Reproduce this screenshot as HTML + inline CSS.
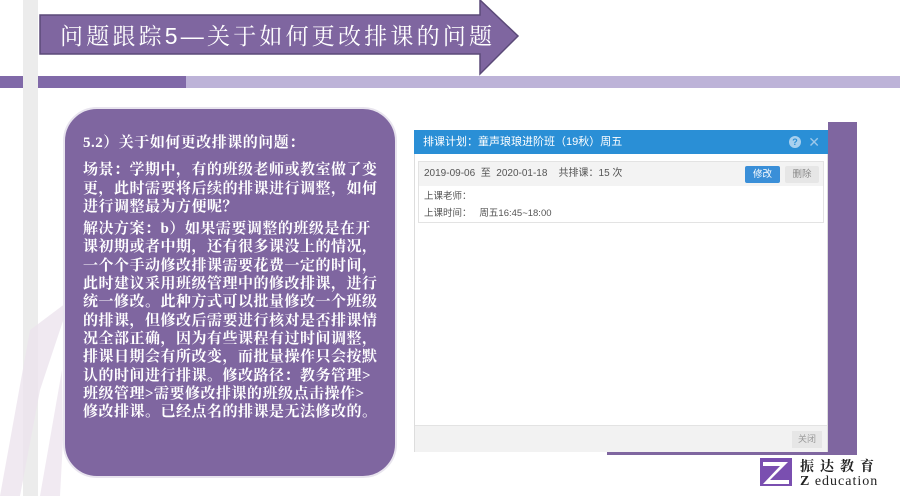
<!DOCTYPE html>
<html><head><meta charset="utf-8"><style>
*{margin:0;padding:0;box-sizing:border-box}
body{width:900px;height:496px;background:#fff;position:relative;overflow:hidden;font-family:"Liberation Sans","Noto Sans CJK SC",sans-serif}
.abs{position:absolute}
.txt{font-family:"Liberation Serif","Noto Serif CJK SC",serif;color:#fff;font-weight:bold;font-size:15px;letter-spacing:0.5px;line-height:18.3px;white-space:nowrap}
.txt p{margin-bottom:4px}
</style></head><body>
<div class="abs" style="left:23px;top:0;width:15px;height:496px;background:#ececec"></div>
<div class="abs" style="left:0;top:76px;width:23px;height:12px;background:#8069a8"></div>
<div class="abs" style="left:38px;top:76px;width:148px;height:12px;background:#8069a8"></div>
<div class="abs" style="left:186px;top:76px;width:714px;height:12px;background:#bdb3d8"></div>
<svg class="abs" style="left:0;top:0" width="900" height="496">
<polygon points="40,15 480,15 480,0 518,36 480,74 480,54 40,54" fill="#7f66a0" stroke="#5b4a78" stroke-width="1.5"/>
<path d="M0,496 L30,330 L70,300 L40,390 L20,496 Z" fill="#ece4ee" opacity="0.8"/>
<path d="M40,496 L62,370 L63,440 L60,496 Z" fill="#eee5ef" opacity="0.8"/>
</svg>
<div class="abs" style="left:60px;top:18px;font-size:23px;color:#fff;letter-spacing:3.2px;font-family:'Liberation Sans','Noto Serif CJK SC',serif">问题跟踪5—关于如何更改排课的问题</div>
<div class="abs" style="left:63px;top:107px;width:334px;height:371px;background:#7f66a0;border-radius:34px;border:2px solid #e8e4ee"></div>
<div class="abs txt" style="left:83px;top:134px">
<p style="margin-bottom:9px">5.2）关于如何更改排课的问题：</p>
<p>场景：学期中，有的班级老师或教室做了变<br>更，此时需要将后续的排课进行调整，如何<br>进行调整最为方便呢？</p>
<p>解决方案：b）如果需要调整的班级是在开<br>课初期或者中期，还有很多课没上的情况，<br>一个个手动修改排课需要花费一定的时间，<br>此时建议采用班级管理中的修改排课，进行<br>统一修改。此种方式可以批量修改一个班级<br>的排课，但修改后需要进行核对是否排课情<br>况全部正确，因为有些课程有过时间调整，<br>排课日期会有所改变，而批量操作只会按默<br>认的时间进行排课。修改路径：教务管理&gt;<br>班级管理&gt;需要修改排课的班级点击操作&gt;<br>修改排课。已经点名的排课是无法修改的。</p>
</div>
<div class="abs" style="left:828px;top:122px;width:29px;height:333px;background:#7f66a0"></div>
<div class="abs" style="left:607px;top:451px;width:250px;height:4px;background:#7f66a0"></div>
<div class="abs" style="left:414px;top:130px;width:414px;height:322px;background:#fff;border:1px solid #ddd"></div>
<div class="abs" style="left:414px;top:130px;width:414px;height:24px;background:#2a8fd6;color:#fff;font-size:11px;line-height:24px;padding-left:9px">排课计划：童声琅琅进阶班（19秋）周五
<span style="position:absolute;right:27px;top:6px;width:12px;height:12px;border-radius:50%;background:#a8d0ee;color:#2a8fd6;font-size:9px;line-height:12px;text-align:center;font-weight:bold">?</span>
<span style="position:absolute;right:8px;top:0;color:#9cc8ea;font-size:14px">✕</span></div>
<div class="abs" style="left:418px;top:161px;width:406px;height:62px;border:1px solid #e3e3e3;font-size:9.5px;color:#555">
<div style="background:#f3f3f3;height:24px;line-height:24px;padding-left:5px;font-size:10px">2019-09-06 &nbsp;至 &nbsp;2020-01-18 &nbsp;&nbsp;&nbsp;共排课：15 次</div>
<div style="position:absolute;left:326px;top:4px;width:35px;height:17px;background:#3a8fd8;color:#fff;text-align:center;line-height:17px;border-radius:2px">修改</div>
<div style="position:absolute;left:366px;top:4px;width:34px;height:17px;background:#e6e6e6;color:#888;text-align:center;line-height:17px;border-radius:2px">删除</div>
<div style="padding-left:5px;line-height:17px;margin-top:2px">上课老师：</div>
<div style="padding-left:5px;line-height:17px">上课时间： &nbsp;&nbsp;周五16:45~18:00</div>
</div>
<div class="abs" style="left:415px;top:425px;width:412px;height:27px;background:#f2f2f2;border-top:1px solid #e3e3e3"></div>
<div class="abs" style="left:792px;top:431px;width:30px;height:17px;background:#e6e6e6;color:#999;font-size:9px;text-align:center;line-height:17px">关闭</div>
<svg class="abs" style="left:760px;top:458px" width="32" height="28"><rect width="32" height="28" fill="#7a4fb0"/><path d="M3,4 H28 L10,22 H29 V26 H3 L20,8 H3Z" fill="#fff"/></svg>
<div class="abs" style="left:800px;top:456px;font-family:'Liberation Serif','Noto Serif CJK SC',serif;font-weight:bold;font-size:14px;letter-spacing:6px;color:#222">振达教育</div>
<div class="abs" style="left:800px;top:474px;font-family:'Liberation Serif',serif;font-size:14px;letter-spacing:1px;color:#222"><b>Z</b> education</div>
</body></html>
